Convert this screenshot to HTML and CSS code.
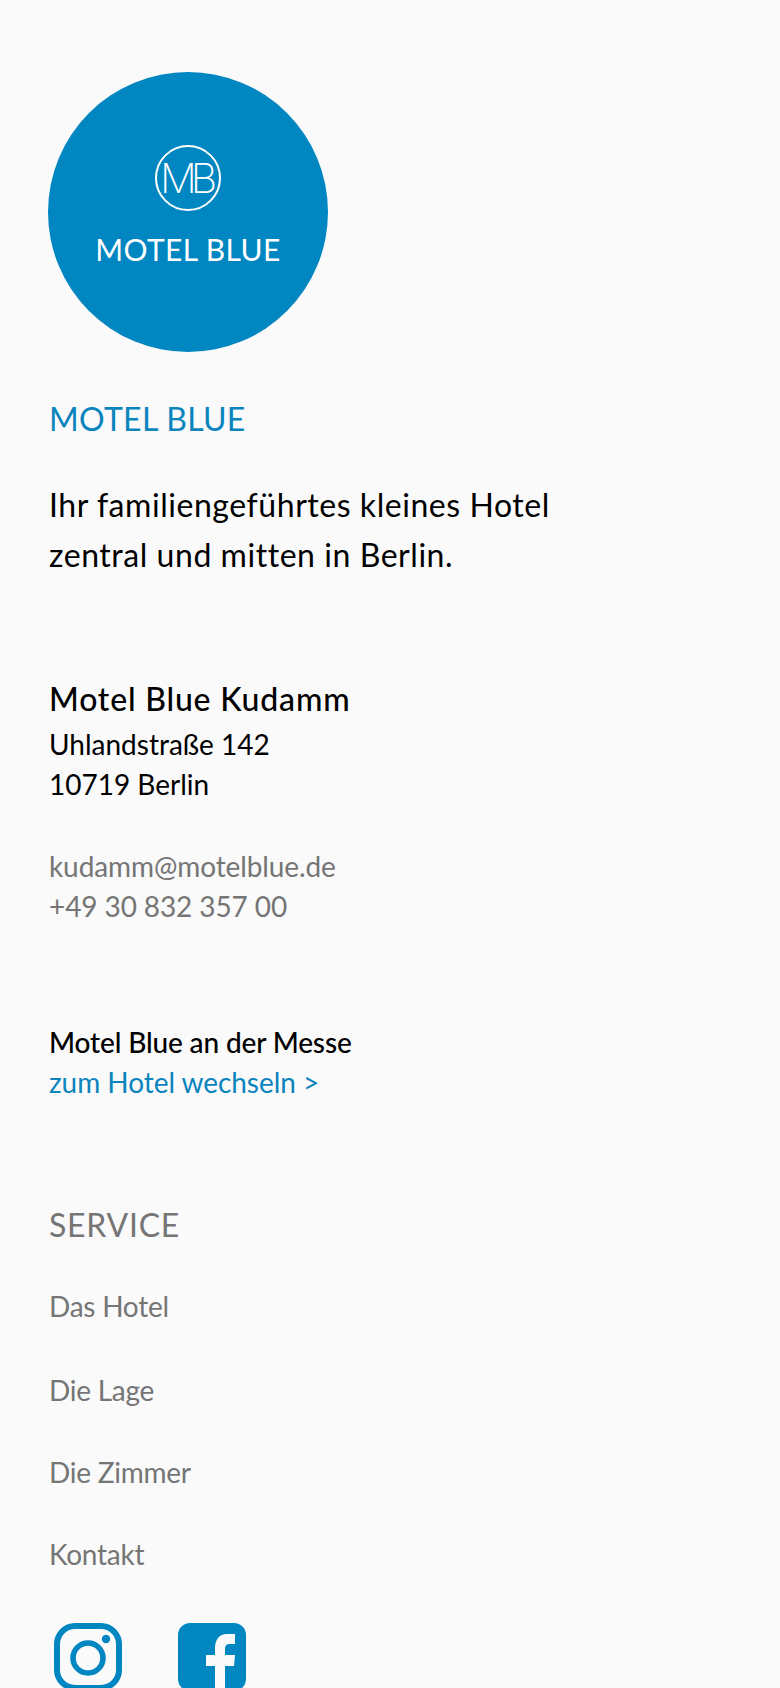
FILE: index.html
```html
<!DOCTYPE html>
<html>
  <head>
    <meta name="viewport" content="width=device-width, initial-scale=1.0" />
    <title>Motel Blue</title>
    <link rel="stylesheet" href="styles.css">
  </head>
  <body>
    <div class="logo">
      <div class="logo-mark">MB</div>
      <div class="logo-name">MOTEL BLUE</div>
    </div>

    <h2 class="brand">MOTEL BLUE</h2>
    <p class="claim">Ihr familiengeführtes kleines Hotel<br />zentral und mitten in Berlin.</p>

    <h3 class="hotel-name">Motel Blue Kudamm</h3>
    <p class="address">Uhlandstraße 142<br />10719 Berlin</p>
    <p class="contact">
      <a href="#">kudamm@motelblue.de</a><br />
      <a href="#">+49 30 832 357 00</a>
    </p>

    <p class="other-hotel">
      <span class="other-name">Motel Blue an der Messe</span><br />
      <a href="#">zum Hotel wechseln &gt;</a>
    </p>

    <h2 class="service-title">SERVICE</h2>
    <ul class="service-list">
      <li><a href="#">Das Hotel</a></li>
      <li><a href="#">Die Lage</a></li>
      <li><a href="#">Die Zimmer</a></li>
      <li><a href="#">Kontakt</a></li>
    </ul>

    <div class="social">
      <a href="#" class="social-link">
        <svg width="68" height="68" viewBox="0 0 68 68">
          <rect x="3" y="3" width="62" height="62" rx="18" fill="none" stroke="#0086c1" stroke-width="6" />
          <circle cx="34" cy="35" r="15" fill="none" stroke="#0086c1" stroke-width="5.5" />
          <circle cx="52" cy="16" r="4.2" fill="#0086c1" />
        </svg>
      </a>
      <a href="#" class="social-link">
        <svg width="68" height="68" viewBox="0 0 68 68">
          <path fill="#0086c1" d="M12 0H56A12 12 0 0 1 68 12V56A12 12 0 0 1 56 68H47V43H56L57 32H47V26C47 22 49 21 52 21H57V11H49C41 11 37 17 37 25V32H28V43H37V68H12A12 12 0 0 1 0 56V12A12 12 0 0 1 12 0Z" />
        </svg>
      </a>
    </div>
  </body>
</html>
```

FILE: styles.css
```css
html {
  height: 1688px;
  overflow: hidden;
}

body {
  background-color: #fafafa;
  color: #000;
  font-family: Lato, "Noto Sans", Arial, sans-serif;
  font-size: 28px;
  line-height: 40px;
  margin: 0;
  padding: 72px 0 0 49px;
  height: 1688px;
  box-sizing: border-box;
  overflow: hidden;
}

a {
  color: inherit;
  text-decoration: none;
}

h2,
h3,
p,
ul {
  margin: 0;
  padding: 0;
  font-weight: normal;
}

.logo {
  width: 280px;
  height: 280px;
  margin-left: -1px;
  border-radius: 50%;
  background: #0086c1;
  color: #fff;
  display: flex;
  flex-direction: column;
  align-items: center;
  box-sizing: border-box;
  padding-top: 73px;
}

.logo-mark {
  width: 66px;
  height: 66px;
  border: 2px solid #fff;
  border-radius: 50%;
  box-sizing: border-box;
  display: flex;
  align-items: center;
  justify-content: center;
  font-family: Inter, sans-serif;
  font-weight: 200;
  font-size: 41px;
  letter-spacing: -6px;
  padding-right: 5px;
}

.logo-name {
  font-family: Lato, sans-serif;
  font-weight: 400;
  font-size: 30px;
  line-height: 36px;
  letter-spacing: 0.4px;
  margin-top: 20px;
  white-space: nowrap;
}

.brand {
  color: #0a84bd;
  font-size: 32px;
  line-height: 50px;
  letter-spacing: 0.3px;
  margin-top: 42px;
}

.claim {
  font-size: 32px;
  line-height: 50px;
  letter-spacing: 0.55px;
  margin-top: 36px;
}

.hotel-name {
  font-size: 32px;
  font-weight: 500;
  line-height: 50px;
  letter-spacing: 0.8px;
  margin-top: 94px;
}

.address {
  margin-top: 0;
}

.contact {
  color: #757575;
  letter-spacing: -0.1px;
  margin-top: 42px;
}

.other-hotel {
  margin-top: 96px;
}

.other-hotel a {
  color: #0a84bd;
  letter-spacing: -0.05px;
}

.other-name {
  font-weight: 500;
  letter-spacing: -0.14px;
}

.service-title {
  color: #757575;
  font-size: 32px;
  line-height: 50px;
  letter-spacing: 0.75px;
  margin-top: 98px;
}

.service-list {
  color: #757575;
  letter-spacing: -0.25px;
  list-style: none;
  margin-top: 36px;
}

.service-list li {
  margin-bottom: 42px;
}

.service-list li:first-child {
  margin-bottom: 44px;
}

.social {
  display: flex;
  gap: 56px;
  margin-left: 5px;
  margin-top: 49px;
}

.social-link {
  display: block;
  height: 68px;
}
```
